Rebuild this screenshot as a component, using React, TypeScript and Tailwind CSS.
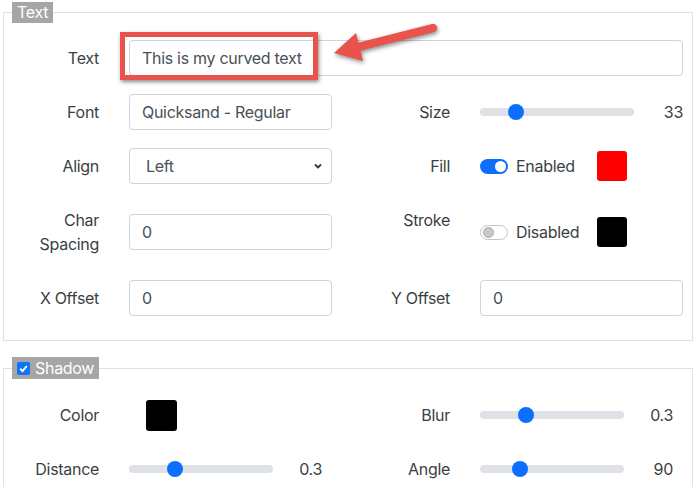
import React from "react";

const labelCls = "text-right text-[#3a3f44] pt-[6px] pb-[6px] leading-[24px]";
const inputCls =
  "h-[36px] border border-[#ced4da] rounded-[4px] bg-white flex items-center pl-[12px] text-[#495057]";

function Slider({ width, pos }: { width: number; pos: number }) {
  return (
    <div className="relative h-[8px] rounded-full bg-[#dee2e6]" style={{ width }}>
      <div
        className="absolute top-1/2 -translate-y-1/2 w-[16px] h-[16px] rounded-full bg-[#0d6efd]"
        style={{ left: 8 + pos * (width - 16) - 8 }}
      />
    </div>
  );
}

function Toggle({ on }: { on: boolean }) {
  return on ? (
    <div className="w-[28px] h-[15px] rounded-full bg-[#0d6efd] flex items-center justify-end pr-[2px]">
      <div className="w-[11px] h-[11px] rounded-full bg-white" />
    </div>
  ) : (
    <div className="w-[28px] h-[15px] rounded-full bg-white border border-[#c4c4c4] flex items-center pl-[2px]">
      <div className="w-[11px] h-[11px] rounded-full bg-[#c8c8c8] border border-[#aaaaaa]" />
    </div>
  );
}

export default function App() {
  return (
    <div className="relative w-[693px] h-[487px] overflow-hidden bg-white font-['Inter','Liberation_Sans',sans-serif] text-[16px] tracking-[-0.3px]">
      <fieldset className="ml-[3px] mt-[2px] w-[690px] border border-[#dfe1e3] pb-[24px]">
        <legend className="ml-[8px] px-[5px] bg-[#a6a6a6] text-white leading-[21px]">Text</legend>
        <div className="pt-[17px] grid grid-cols-[95px_203px_88px_203px] gap-x-[30px] gap-y-[18px]">
          <div className={labelCls}>Text</div>
          <div className={`${inputCls} col-span-3`}>This is my curved text</div>

          <div className={labelCls}>Font</div>
          <div className={inputCls}>Quicksand - Regular</div>
          <div className={labelCls}>Size</div>
          <div className="flex items-center justify-between">
            <Slider width={154} pos={0.2} />
            <span className="text-[#3a3f44]">33</span>
          </div>

          <div className={labelCls}>Align</div>
          <div className={`${inputCls} pl-[16px] justify-between pr-[8px]`}>
            <span>Left</span>
            <svg width="10" height="10" viewBox="0 0 10 10">
              <path d="M2 3.5 L5 6.5 L8 3.5" fill="none" stroke="#333" strokeWidth="1.8" />
            </svg>
          </div>
          <div className={labelCls}>Fill</div>
          <div className="flex items-center">
            <Toggle on />
            <span className="ml-[8px] w-[81px] text-[#3a3f44]">Enabled</span>
            <div className="w-[30px] h-[30px] rounded-[3px] bg-[#ff0000]" />
          </div>

          <div className={labelCls}>
            Char
            <br />
            Spacing
          </div>
          <div className={`${inputCls} self-center`}>0</div>
          <div className={labelCls}>Stroke</div>
          <div className="flex items-center self-center">
            <Toggle on={false} />
            <span className="ml-[8px] w-[81px] text-[#3a3f44]">Disabled</span>
            <div className="w-[30px] h-[30px] rounded-[3px] bg-black" />
          </div>

          <div className={labelCls}>X Offset</div>
          <div className={inputCls}>0</div>
          <div className={labelCls}>Y Offset</div>
          <div className={inputCls}>0</div>
        </div>
      </fieldset>

      <fieldset className="ml-[3px] mt-[16px] w-[690px] border border-[#dfe1e3] pb-[24px]">
        <legend className="ml-[8px] px-[5px] bg-[#a6a6a6] text-white leading-[22px] flex items-center">
          <span className="w-[13px] h-[13px] rounded-[2px] bg-[#0b76f7] flex items-center justify-center mr-[5px]">
            <svg width="11" height="11" viewBox="0 0 11 11">
              <path d="M2.2 5.8 L4.5 8 L8.8 3" fill="none" stroke="white" strokeWidth="1.9" />
            </svg>
          </span>
          Shadow
        </legend>
        <div className="pt-[18px] grid grid-cols-[95px_203px_88px_203px] gap-x-[30px] gap-y-[18px]">
          <div className={labelCls}>Color</div>
          <div className="h-[36px] flex items-center">
            <div className="ml-[17px] w-[31px] h-[31px] rounded-[3px] bg-black" />
          </div>
          <div className={labelCls}>Blur</div>
          <div className="h-[36px] flex items-center justify-between pr-[10px]">
            <Slider width={144} pos={0.3} />
            <span className="text-[#3a3f44]">0.3</span>
          </div>

          <div className={labelCls}>Distance</div>
          <div className="h-[36px] flex items-center justify-between pr-[10px]">
            <Slider width={144} pos={0.3} />
            <span className="text-[#3a3f44]">0.3</span>
          </div>
          <div className={labelCls}>Angle</div>
          <div className="h-[36px] flex items-center justify-between pr-[10px]">
            <Slider width={144} pos={0.25} />
            <span className="text-[#3a3f44]">90</span>
          </div>
        </div>
      </fieldset>

      {/* annotation overlay */}
      <div className="absolute left-[120px] top-[32px] w-[198px] h-[48px] border-[5px] border-[#e9534b] shadow-[1px_2px_4px_rgba(0,0,0,0.45)]" />
      <svg
        className="absolute left-0 top-0 pointer-events-none"
        width="693"
        height="487"
        style={{ filter: "drop-shadow(1px 2px 2px rgba(0,0,0,0.45))" }}
      >
        <line x1="433" y1="28" x2="356" y2="47.5" stroke="#e9534b" strokeWidth="8" strokeLinecap="round" />
        <polygon points="334,53 356,33 363,61" fill="#e9534b" />
      </svg>
    </div>
  );
}
